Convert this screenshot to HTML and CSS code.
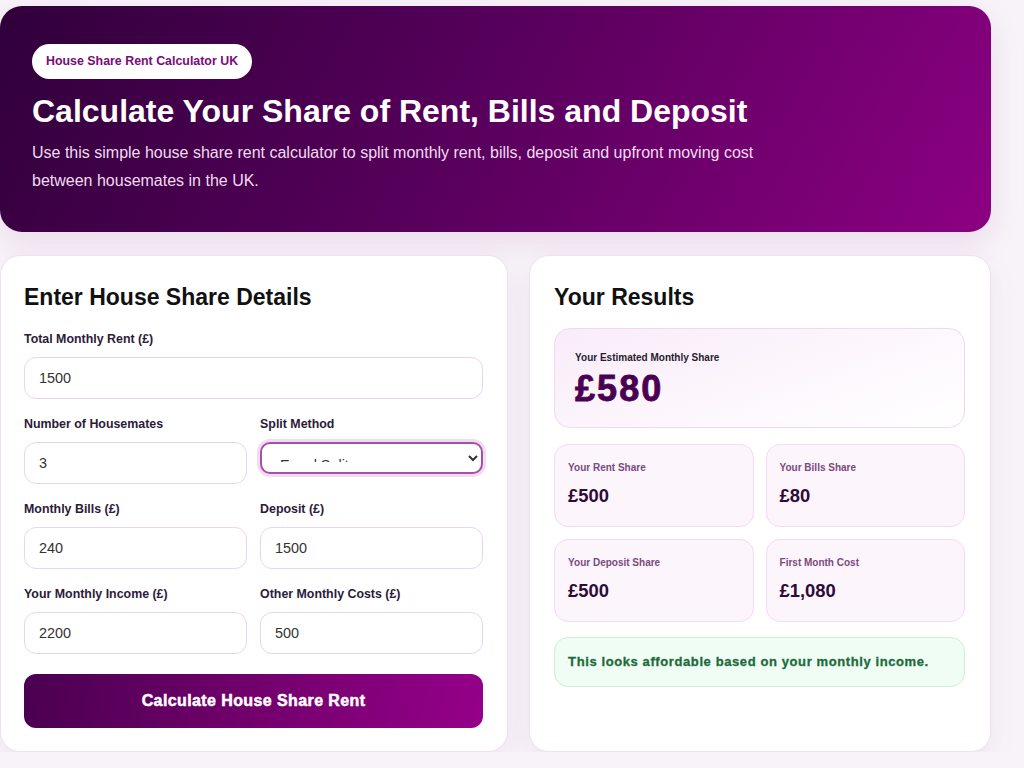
FILE: index.html
```html
<!DOCTYPE html>
<html lang="en">
<head>
<meta charset="utf-8">
<title>House Share Rent Calculator UK</title>
<link rel="stylesheet" href="styles.css">
</head>
<body>
<div class="page">
  <header class="hero">
    <span class="badge">House Share Rent Calculator UK</span>
    <h1>Calculate Your Share of Rent, Bills and Deposit</h1>
    <p>Use this simple house share rent calculator to split monthly rent, bills, deposit and upfront moving cost between housemates in the UK.</p>
  </header>
  <main class="grid">
    <section class="card form-card">
      <h2>Enter House Share Details</h2>
      <div class="field">
        <label>Total Monthly Rent (£)</label>
        <input type="text" value="1500">
      </div>
      <div class="row">
        <div class="field">
          <label>Number of Housemates</label>
          <input type="text" value="3">
        </div>
        <div class="field">
          <label>Split Method</label>
          <select class="focused"><option>Equal Split</option></select>
        </div>
      </div>
      <div class="row">
        <div class="field">
          <label>Monthly Bills (£)</label>
          <input type="text" value="240">
        </div>
        <div class="field">
          <label>Deposit (£)</label>
          <input type="text" value="1500">
        </div>
      </div>
      <div class="row">
        <div class="field">
          <label>Your Monthly Income (£)</label>
          <input type="text" value="2200">
        </div>
        <div class="field">
          <label>Other Monthly Costs (£)</label>
          <input type="text" value="500">
        </div>
      </div>
      <button class="calc">Calculate House Share Rent</button>
    </section>
    <section class="card results-card">
      <h2>Your Results</h2>
      <div class="main-result">
        <div class="main-label">Your Estimated Monthly Share</div>
        <div class="main-value">£580</div>
      </div>
      <div class="mini-grid">
        <div class="mini"><div class="mini-label">Your Rent Share</div><div class="mini-value">£500</div></div>
        <div class="mini"><div class="mini-label">Your Bills Share</div><div class="mini-value">£80</div></div>
        <div class="mini"><div class="mini-label">Your Deposit Share</div><div class="mini-value">£500</div></div>
        <div class="mini"><div class="mini-label">First Month Cost</div><div class="mini-value">£1,080</div></div>
      </div>
      <div class="note">This looks affordable based on your monthly income.</div>
    </section>
  </main>
</div>
</body>
</html>
```

FILE: styles.css
```css
* { box-sizing: border-box; }
html, body { margin: 0; padding: 0; }
body {
  background: #f8f3f9;
  font-family: "Liberation Sans", Arial, sans-serif;
  color: #111;
}
.page {
  width: 991px;
  padding-top: 6px;
}
.hero {
  background: linear-gradient(120deg, #30003a 0%, #55005a 45%, #8c0082 100%);
  border-radius: 22px;
  padding: 38px 32px 38px 32px;
  height: 226px;
  color: #fff;
  box-shadow: 0 10px 30px rgba(120, 40, 120, 0.12);
}
.badge {
  display: inline-block;
  background: #fff;
  color: #7a0a78;
  font-weight: bold;
  font-size: 12.4px;
  line-height: 35px;
  height: 35px;
  padding: 0 14px;
  border-radius: 18px;
}
.hero h1 {
  margin: 12px 0 0;
  font-size: 32px;
  line-height: 40px;
  font-weight: bold;
}
.hero p {
  margin: 8px 0 0;
  font-size: 16px;
  line-height: 28px;
  color: #f0dcef;
  max-width: 760px;
}
.grid {
  display: grid;
  grid-template-columns: 1.1fr 1fr;
  gap: 21px;
  margin-top: 23px;
}
.card {
  background: #fff;
  border: 1px solid #f0e0f2;
  border-radius: 20px;
  box-shadow: 0 10px 30px rgba(120, 40, 120, 0.07);
  height: 497px;
}
.form-card { padding: 26px 24px 24px 23px; }
.results-card { padding: 26px 25px 24px 24px; }
h2 {
  margin: 0;
  font-size: 23px;
  line-height: 30px;
  font-weight: bold;
  color: #111;
}
.form-card h2 { margin-bottom: 19px; }
.field { display: flex; flex-direction: column; min-width: 0; }
label {
  font-size: 12.4px;
  font-weight: bold;
  color: #2c1a3a;
  line-height: 16px;
  margin-bottom: 10px;
}
input, select {
  font-family: "Liberation Sans", Arial, sans-serif;
  font-size: 14.4px;
  color: #333;
  height: 42px;
  border: 1px solid #ecd3ee;
  border-radius: 12px;
  padding: 0 14px;
  background: #fff;
  width: 100%;
}
select.focused {
  height: 32px;
  padding: 12px 14px 10px;
  border: 2px solid #a850a8;
  border-radius: 10px;
  box-shadow: 0 0 0 3px #f2dcf2;
  outline: none;
}
.row {
  display: grid;
  grid-template-columns: 1fr 1fr;
  gap: 13px;
  margin-top: 17px;
  align-items: start;
}
.calc {
  margin-top: 20px;
  width: 100%;
  height: 54px;
  border: none;
  border-radius: 12px;
  background: linear-gradient(100deg, #4a0050 0%, #72006c 50%, #950089 100%);
  color: #fff;
  font-family: "Liberation Sans", Arial, sans-serif;
  font-weight: bold;
  font-size: 16px;
  letter-spacing: 0.4px;
  -webkit-text-stroke: 0.5px #fff;
}
.results-card h2 { margin-bottom: 16px; }
.main-result {
  height: 100px;
  border: 1px solid #f0d8f2;
  border-radius: 16px;
  background: linear-gradient(160deg, #f8ecf9 0%, #fdf8fd 60%, #fff 100%);
  padding: 22px 20px;
}
.main-label {
  font-size: 10px;
  font-weight: bold;
  color: #2a1a30;
  line-height: 14px;
}
.main-value {
  font-size: 36px;
  font-weight: 900;
  color: #4a0052;
  line-height: 40px;
  margin-top: 4px;
  letter-spacing: 2px;
  -webkit-text-stroke: 0.8px #4a0052;
}
.mini-grid {
  display: grid;
  grid-template-columns: 1fr 1fr;
  gap: 12px;
  margin-top: 16px;
}
.mini {
  height: 83px;
  background: #fcf5fc;
  border: 1px solid #f0dcf2;
  border-radius: 14px;
  padding: 16px 13px;
}
.mini-label {
  font-size: 10px;
  font-weight: bold;
  color: #7a4a80;
  line-height: 14px;
}
.mini-value {
  margin-top: 10px;
  font-size: 18.4px;
  font-weight: bold;
  color: #2e0a38;
  line-height: 22px;
}
.note {
  margin-top: 15px;
  height: 50px;
  background: #effdf4;
  border: 1px solid #cdeed8;
  border-radius: 14px;
  padding: 0 13px;
  line-height: 48px;
  font-size: 13px;
  font-weight: bold;
  color: #1d6b3b;
  letter-spacing: 0.6px;
  -webkit-text-stroke: 0.3px #1d6b3b;
}
```
